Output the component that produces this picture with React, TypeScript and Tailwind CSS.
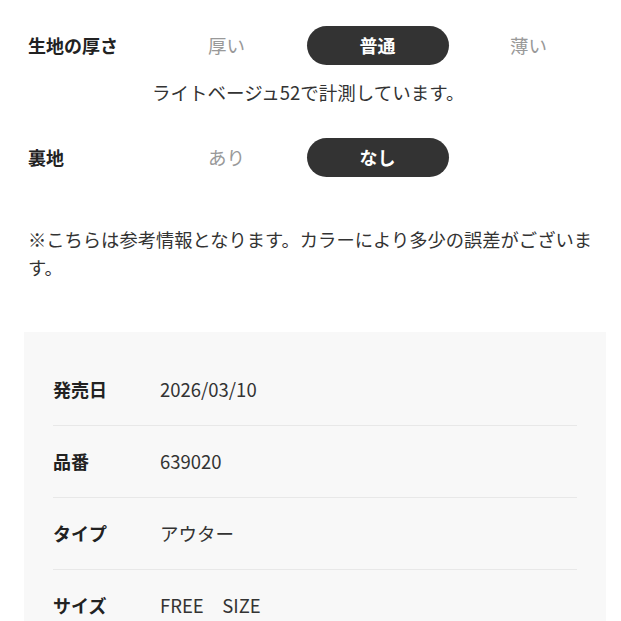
const options = [
  {
    label: "生地の厚さ",
    items: ["厚い", "普通", "薄い"],
    active: 1,
    note: "ライトベージュ52で計測しています。",
  },
  {
    label: "裏地",
    items: ["あり", "なし", ""],
    active: 1,
  },
];

const specs = [
  { label: "発売日", value: "2026/03/10" },
  { label: "品番", value: "639020" },
  { label: "タイプ", value: "アウター" },
  { label: "サイズ", value: "FREE\u3000SIZE" },
];

export default function App() {
  return (
    <div
      className="w-[621px] h-[621px] overflow-hidden bg-white text-[#333]"
      style={{ fontFamily: '"Noto Sans CJK JP", "Noto Sans", sans-serif' }}
    >
      <div className="pt-[26px] pl-[28px] pr-[17px]">
        {options.map((row, i) => (
          <div key={row.label} className={i > 0 ? "mt-[33px]" : ""}>
            <div className="flex items-center">
              <div className="w-[123px] text-[18px] font-bold text-[#222]">{row.label}</div>
              <div className="grid grid-cols-3 w-[453px]">
                {row.items.map((item, j) => (
                  <div key={j} className="flex justify-center">
                    {item && (
                      <span
                        className={
                          j === row.active
                            ? "flex items-center justify-center w-[142px] h-[39px] rounded-full bg-[#333] text-white text-[18px] font-bold"
                            : "flex items-center justify-center w-[142px] h-[39px] text-[18.5px] text-[#999]"
                        }
                      >
                        {item}
                      </span>
                    )}
                  </div>
                ))}
              </div>
            </div>
            {row.note && (
              <p className="mt-[14px] ml-[124px] text-[18.5px] leading-[26px] text-[#333]">{row.note}</p>
            )}
          </div>
        ))}
      </div>

      <p className="mt-[48px] pl-[28px] pr-[20px] text-[18.3px] leading-[28px] text-[#333]">
        ※こちらは参考情報となります。カラーにより多少の誤差がございます。
      </p>

      <div className="mt-[51px] mx-[24px] w-[582px] bg-[#f8f8f8] px-[29px] pt-[22px] pb-[20px]">
        {specs.map((s) => (
          <div key={s.label} className="flex items-center h-[72px] border-b border-[#e8e8e8]">
            <div className="w-[107px] text-[18px] font-bold text-[#222]">{s.label}</div>
            <div className="text-[18.5px] text-[#333] whitespace-pre">{s.value}</div>
          </div>
        ))}
      </div>
    </div>
  );
}
